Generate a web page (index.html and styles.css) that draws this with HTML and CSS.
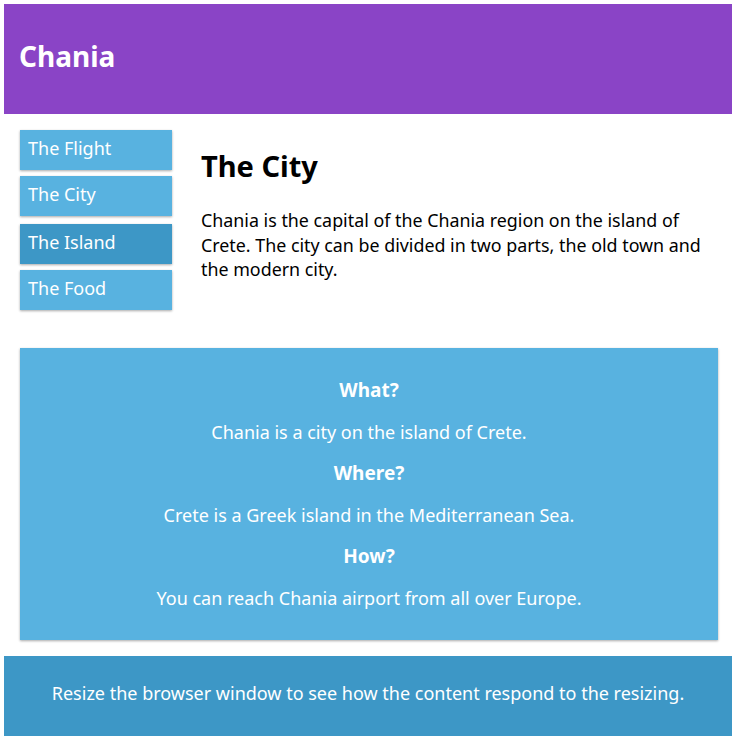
FILE: index.html
```html
<!DOCTYPE html>
<html>
<head>
<meta charset="utf-8">
<link rel="stylesheet" href="styles.css">
</head>
<body>
<div class="header"><h1>Chania</h1></div>
<div class="row">
  <div class="menu">
    <ul>
      <li>The Flight</li>
      <li>The City</li>
      <li class="active">The Island</li>
      <li>The Food</li>
    </ul>
  </div>
  <div class="main">
    <h2>The City</h2>
    <p>Chania is the capital of the Chania region on the island of Crete. The city can be divided in two parts, the old town and the modern city.</p>
  </div>
</div>
<div class="aside">
  <h3>What?</h3>
  <p>Chania is a city on the island of Crete.</p>
  <h3>Where?</h3>
  <p>Crete is a Greek island in the Mediterranean Sea.</p>
  <h3>How?</h3>
  <p>You can reach Chania airport from all over Europe.</p>
</div>
<div class="footer"><p>Resize the browser window to see how the content respond to the resizing.</p></div>
</body>
</html>
```
FILE: styles.css
```css
* { box-sizing: border-box; }
body {
  margin: 4px;
  font-family: "Noto Sans", sans-serif;
  color: #000;
}
.header {
  background: #8a44c6;
  color: #fff;
  height: 110px;
  padding: 0 15px;
  display: flex;
  align-items: center;
}
.header h1 {
  margin: 0 0 6px;
  font-size: 28px;
  font-weight: bold;
}
.row {
  display: flex;
  padding: 16px 14px 0 16px;
}
.menu { width: 152px; flex: none; }
.menu ul { list-style: none; margin: 0; padding: 0; }
.menu li {
  height: 40px;
  padding: 0 8px 4px;
  margin-bottom: 6px;
  display: flex;
  align-items: center;
  background: #58b2e0;
  color: #fff;
  font-size: 18px;
  box-shadow: 0 1px 3px rgba(0,0,0,0.12), 0 1px 2px rgba(0,0,0,0.24);
}
.menu li.active { background: #3d97c6; margin-top: 8px; }
.main { padding-left: 29px; padding-top: 19px; }
.main h2 { margin: 0 0 25px; font-size: 29px; font-weight: bold; line-height: 34px; }
.main p { margin: 0; font-size: 17.85px; line-height: 24.5px; }
.aside {
  margin: 32px 14px 0 16px;
  height: 292px;
  background: #58b2e0;
  color: #fff;
  text-align: center;
  padding-top: 29px;
  box-shadow: 0 1px 3px rgba(0,0,0,0.12), 0 1px 2px rgba(0,0,0,0.24);
}
.aside h3 { margin: 0; font-size: 19px; font-weight: bold; line-height: 26px; }
.aside p { margin: 15.5px 0; font-size: 18px; line-height: 26px; }
.footer {
  margin-top: 16px;
  height: 80px;
  padding-bottom: 7px;
  background: #3d97c6;
  color: #fff;
  text-align: center;
  display: flex;
  align-items: center;
  justify-content: center;
}
.footer p { margin: 0; font-size: 18px; }
```
